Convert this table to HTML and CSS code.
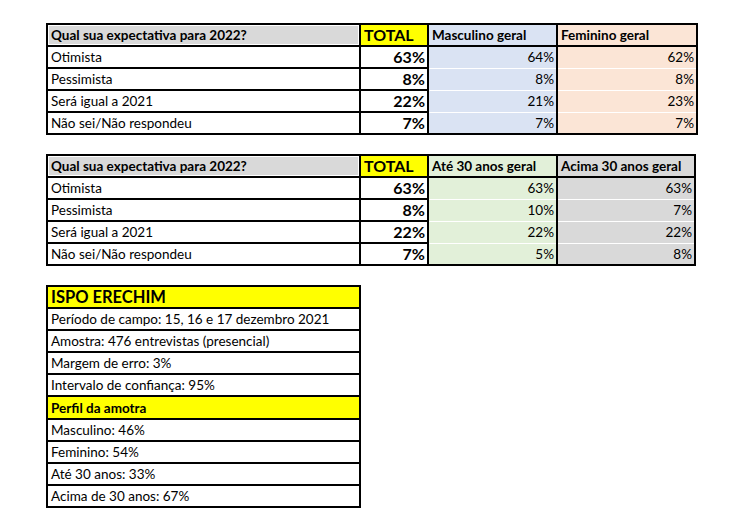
FILE: index.html
```html
<!DOCTYPE html>
<html lang="pt-BR">
<head>
<meta charset="utf-8">
<title>ISPO Erechim</title>
<link rel="stylesheet" href="styles.css">
</head>
<body>
<main class="page">
  <table class="grid grid-1">
    <colgroup>
      <col class="c-q"><col class="c-total"><col class="c-a"><col class="c-b">
    </colgroup>
    <tr class="head">
      <th class="q">Qual sua expectativa para 2022?</th>
      <th class="total">TOTAL</th>
      <th class="sub blue">Masculino geral</th>
      <th class="sub peach">Feminino geral</th>
    </tr>
    <tr><td class="q">Otimista</td><td class="num total-v">63%</td><td class="num blue">64%</td><td class="num peach">62%</td></tr>
    <tr><td class="q">Pessimista</td><td class="num total-v">8%</td><td class="num blue">8%</td><td class="num peach">8%</td></tr>
    <tr><td class="q">Será igual a 2021</td><td class="num total-v">22%</td><td class="num blue">21%</td><td class="num peach">23%</td></tr>
    <tr class="last"><td class="q">Não sei/Não respondeu</td><td class="num total-v">7%</td><td class="num blue">7%</td><td class="num peach">7%</td></tr>
  </table>

  <table class="grid grid-2">
    <colgroup>
      <col class="c-q"><col class="c-total"><col class="c-a"><col class="c-b2">
    </colgroup>
    <tr class="head">
      <th class="q">Qual sua expectativa para 2022?</th>
      <th class="total">TOTAL</th>
      <th class="sub green">Até 30 anos geral</th>
      <th class="sub grey">Acima 30 anos geral</th>
    </tr>
    <tr><td class="q">Otimista</td><td class="num total-v">63%</td><td class="num green">63%</td><td class="num grey">63%</td></tr>
    <tr><td class="q">Pessimista</td><td class="num total-v">8%</td><td class="num green">10%</td><td class="num grey">7%</td></tr>
    <tr><td class="q">Será igual a 2021</td><td class="num total-v">22%</td><td class="num green">22%</td><td class="num grey">22%</td></tr>
    <tr class="last"><td class="q">Não sei/Não respondeu</td><td class="num total-v">7%</td><td class="num green">5%</td><td class="num grey">8%</td></tr>
  </table>

  <table class="info">
    <tr><th class="title">ISPO ERECHIM</th></tr>
    <tr><td>Período de campo: 15, 16 e 17 dezembro 2021</td></tr>
    <tr><td>Amostra: 476 entrevistas (presencial)</td></tr>
    <tr><td>Margem de erro: 3%</td></tr>
    <tr><td>Intervalo de confiança: 95%</td></tr>
    <tr><th class="subtitle">Perfil da amotra</th></tr>
    <tr><td>Masculino: 46%</td></tr>
    <tr><td>Feminino: 54%</td></tr>
    <tr><td>Até 30 anos: 33%</td></tr>
    <tr><td>Acima de 30 anos: 67%</td></tr>
  </table>
</main>
</body>
</html>
```

FILE: styles.css
```css
html, body {
  margin: 0;
  padding: 0;
  background: #ffffff;
}

body {
  font-family: Lato, "Open Sans", sans-serif;
  font-size: 13.5px;
  color: #000000;
}

.page {
  padding: 23px 0 0 46px;
  display: flex;
  flex-direction: column;
  align-items: flex-start;
  gap: 19px;
}

table {
  border-collapse: collapse;
  table-layout: fixed;
}

th, td {
  padding: 0 2px 0 3px;
  height: 20px;
  line-height: 18px;
  white-space: nowrap;
  border: 2px solid #000000;
  text-align: left;
}

th {
  font-weight: 700;
}

.grid-1 { width: 650px; }
.grid-2 { width: 648px; }

.c-q { width: 313px; }
.c-total { width: 68px; }
.c-a { width: 129px; }
.c-b { width: 140px; }
.c-b2 { width: 138px; }

.head .q {
  background: #d9d9d9;
  box-shadow: inset 0 0 0 1px #ffffff;
}

.total {
  background: #ffff00;
  font-size: 16px;
}

.num {
  text-align: right;
}

.total-v {
  font-weight: 700;
  font-size: 16px;
}

.blue { background: #dae3f3; }
.peach { background: #fbe5d6; }
.green { background: #e2f0d9; }
.grey { background: #d9d9d9; }

td.blue, td.peach, td.green, td.grey {
  border-top: 1px solid #ffffff;
  border-bottom: 1px solid #ffffff;
  border-left: 1px solid #404040;
}

td.blue, td.green {
  border-left: 2px solid #000000;
}

tr.last td {
  border-bottom: 2px solid #000000;
}

.head th {
  border-bottom: 2px solid #000000;
}

.info {
  width: 315px;
}

.info td, .info th {
  height: 20.1px;
}

.info .title {
  background: #ffff00;
  font-size: 16.5px;
}

.info .subtitle {
  background: #ffff00;
}
```
